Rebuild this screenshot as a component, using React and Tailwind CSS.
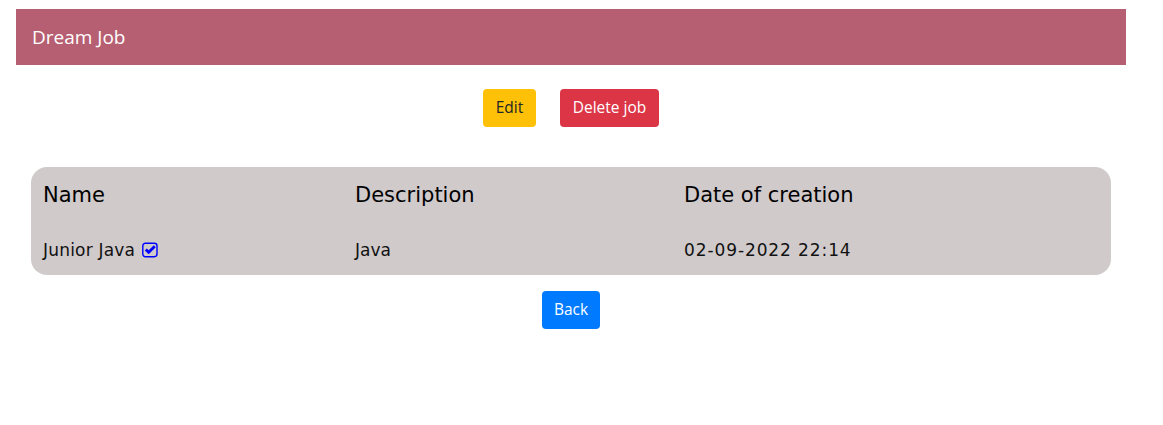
import React from "react";

function CheckSquare() {
  return (
    <svg width="16" height="16" viewBox="0 0 16 16" className="inline-block ml-[7px] -mt-[1px] align-middle">
      <rect x="0.8" y="1.3" width="14.2" height="13.4" rx="2.6" fill="none" stroke="#0000ff" strokeWidth="1.4" />
      <path d="M3.8 7.4 L6.7 10.3 L12.8 4.2" fill="none" stroke="#0000ff" strokeWidth="2.8" strokeLinecap="butt" strokeLinejoin="miter" />
    </svg>
  );
}

export default function App() {
  const ui = { fontFamily: '"Open Sans", "Segoe UI", sans-serif' };
  const tbl = { fontFamily: '"DejaVu Sans", Verdana, sans-serif' };
  return (
    <div className="w-[1163px] h-[425px] bg-white" style={ui}>
      <div className="w-[1142px]">
        <div className="pt-[9px] px-4">
          <div className="h-[56px] bg-[#b75f72] flex items-center pl-4 text-white text-[19px]">Dream Job</div>
        </div>
        <div className="flex justify-center gap-6 mt-6">
          <button className="h-[38px] w-[53px] rounded bg-[#ffc107] text-[#212529] text-[15.5px]">Edit</button>
          <button className="h-[38px] w-[99px] rounded bg-[#dc3545] text-white text-[15.5px]">Delete job</button>
        </div>
        <div className="ml-[31px] mt-10 w-[1080px] h-[108px] rounded-[16px] bg-[#d0cacb] pl-3" style={tbl}>
          <div className="grid grid-cols-[312px_329px_1fr] pt-[16px] text-[21px] leading-[24px] text-black">
            <div>Name</div>
            <div>Description</div>
            <div>Date of creation</div>
          </div>
          <div className="grid grid-cols-[312px_329px_1fr] mt-[33px] text-[17px] leading-[20px] text-[#111]">
            <div className="flex items-center tracking-[0.2px]">Junior Java<CheckSquare /></div>
            <div>Java</div>
            <div className="tracking-[0.9px]">02-09-2022 22:14</div>
          </div>
        </div>
        <div className="flex justify-center mt-4">
          <button className="h-[38px] w-[58px] rounded bg-[#007bff] text-white text-[15.5px]">Back</button>
        </div>
      </div>
    </div>
  );
}
